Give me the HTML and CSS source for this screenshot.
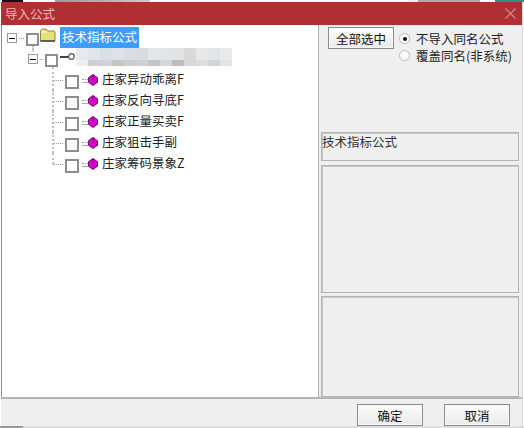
FILE: index.html
```html
<!DOCTYPE html>
<html lang="zh">
<head>
<meta charset="utf-8">
<title>导入公式</title>
<link rel="stylesheet" href="styles.css">
</head>
<body>
<div class="strip-top"></div>
<div class="dialog">
  <header class="titlebar">
    <span class="title">导入公式</span>
    <svg class="close" width="11" height="11" viewBox="0 0 11 11"><path d="M.5 .5 10.500 10.500M10.500 .5 .5 10.500" stroke="#d98a8a" stroke-width="1.200" fill="none"/></svg>
  </header>
  <main class="main">
    <section class="tree">
      <div class="row row-root">
        <span class="exp"></span><span class="dots d-short"></span><span class="check"></span>
        <svg class="folder" width="16" height="14" viewBox="0 0 16 14"><path d="M.5 13V2.500L2 1h4l1.500 2H14l1 1v9z" fill="#e6e07a" stroke="#8a8650"/><path d="M.5 13h14.500" stroke="#444" stroke-width="1.500"/><path d="M1.500 4h6" stroke="#fff"/></svg>
        <span class="label selected">技术指标公式</span>
      </div>
      <div class="row row-group">
        <span class="exp"></span><span class="dots d-short"></span><span class="check"></span>
        <svg class="key" width="16" height="10" viewBox="0 0 16 10"><circle cx="11.500" cy="4.500" r="2.800" fill="#fff" stroke="#555" stroke-width="1.200"/><path d="M0 5h8.500" stroke="#444" stroke-width="2"/></svg>
        <svg class="mosaic" width="156" height="18" viewBox="0 0 13 3" preserveAspectRatio="none" shape-rendering="crispEdges">
          <rect x="0" y="0" width="1" height="2" fill="#e6eaee"/><rect x="1" y="0" width="1" height="2" fill="#dfe5ea"/><rect x="2" y="0" width="1" height="2" fill="#d9e0e6"/><rect x="3" y="0" width="1" height="2" fill="#dde2e6"/><rect x="4" y="0" width="1" height="2" fill="#d8dee4"/><rect x="5" y="0" width="1" height="2" fill="#d6dce2"/><rect x="6" y="0" width="1" height="2" fill="#e4e7ea"/><rect x="7" y="0" width="1" height="2" fill="#e2e4e6"/><rect x="8" y="0" width="1" height="2" fill="#e2e3e4"/><rect x="9" y="0" width="1" height="2" fill="#dad9da"/><rect x="10" y="0" width="1" height="2" fill="#e6e8ea"/><rect x="11" y="0" width="1" height="2" fill="#e2e4e6"/><rect x="12" y="0" width="1" height="2" fill="#e8eaec"/>
          <rect x="0" y="2" width="1" height="1" fill="#eeeeee"/><rect x="1" y="2" width="1" height="1" fill="#cfcfcf"/><rect x="2" y="2" width="1" height="1" fill="#d2d2d2"/><rect x="3" y="2" width="1" height="1" fill="#c6c6c6"/><rect x="4" y="2" width="1" height="1" fill="#cdcdcd"/><rect x="5" y="2" width="1" height="1" fill="#d0d0d0"/><rect x="6" y="2" width="1" height="1" fill="#c4c4c4"/><rect x="7" y="2" width="1" height="1" fill="#d6d6d6"/><rect x="8" y="2" width="1" height="1" fill="#bdbdbd"/><rect x="9" y="2" width="1" height="1" fill="#d8d8d8"/><rect x="10" y="2" width="1" height="1" fill="#dcdcdc"/><rect x="11" y="2" width="1" height="1" fill="#d4d4d4"/><rect x="12" y="2" width="1" height="1" fill="#e4e4e4"/>
        </svg>
      </div>
      <div class="row row-leaf first-leaf">
        <span class="dots d-leaf"></span><span class="check"></span><span class="mini"></span>
        <svg class="gem" width="10" height="12" viewBox="0 0 11 13"><path d="M5.500 .5 10.500 4v5l-5 3.500L.5 9V4z" fill="#e000d0" stroke="#50105a"/><path d="M5.500 .5V6l5 3" stroke="#50105a" fill="none" stroke-width=".7"/></svg>
        <span class="label">庄家异动乖离F</span>
      </div>
      <div class="row row-leaf">
        <span class="dots d-leaf"></span><span class="check"></span><span class="mini"></span>
        <svg class="gem" width="10" height="12" viewBox="0 0 11 13"><path d="M5.500 .5 10.500 4v5l-5 3.500L.5 9V4z" fill="#e000d0" stroke="#50105a"/><path d="M5.500 .5V6l5 3" stroke="#50105a" fill="none" stroke-width=".7"/></svg>
        <span class="label">庄家反向寻底F</span>
      </div>
      <div class="row row-leaf">
        <span class="dots d-leaf"></span><span class="check"></span><span class="mini"></span>
        <svg class="gem" width="10" height="12" viewBox="0 0 11 13"><path d="M5.500 .5 10.500 4v5l-5 3.500L.5 9V4z" fill="#e000d0" stroke="#50105a"/><path d="M5.500 .5V6l5 3" stroke="#50105a" fill="none" stroke-width=".7"/></svg>
        <span class="label">庄家正量买卖F</span>
      </div>
      <div class="row row-leaf">
        <span class="dots d-leaf"></span><span class="check"></span><span class="mini"></span>
        <svg class="gem" width="10" height="12" viewBox="0 0 11 13"><path d="M5.500 .5 10.500 4v5l-5 3.500L.5 9V4z" fill="#e000d0" stroke="#50105a"/><path d="M5.500 .5V6l5 3" stroke="#50105a" fill="none" stroke-width=".7"/></svg>
        <span class="label">庄家狙击手副</span>
      </div>
      <div class="row row-leaf last-leaf">
        <span class="dots d-leaf"></span><span class="check"></span><span class="mini"></span>
        <svg class="gem" width="10" height="12" viewBox="0 0 11 13"><path d="M5.500 .5 10.500 4v5l-5 3.500L.5 9V4z" fill="#e000d0" stroke="#50105a"/><path d="M5.500 .5V6l5 3" stroke="#50105a" fill="none" stroke-width=".7"/></svg>
        <span class="label">庄家筹码景象Z</span>
      </div>
    </section>
    <aside class="side">
      <div class="options">
        <button class="select-all">全部选中</button>
        <div class="radios">
          <div class="radio-row"><span class="radio on"></span><div class="radio-text">不导入同名公式</div></div>
          <div class="radio-row"><span class="radio"></span><div class="radio-text">覆盖同名(非系统)</div></div>
        </div>
      </div>
      <div class="box box-name">技术指标公式</div>
      <div class="box box-mid"></div>
      <div class="box box-low"></div>
    </aside>
  </main>
  <footer class="footer">
    <button class="btn">确定</button>
    <button class="btn">取消</button>
  </footer>
</div>
<div class="strip-bottom"></div>
</body>
</html>
```
FILE: styles.css
```css
html, body {
  margin: 0;
  padding: 0;
  width: 524px;
  height: 428px;
  overflow: hidden;
  background: #fff;
  font-family: "Noto Sans CJK SC", "Liberation Sans", sans-serif;
  font-size: 12.500px;
  color: #222;
}
.strip-top {
  height: 2px;
  background:
    linear-gradient(90deg, #fff 2px, #111 2px, #111 23px, #fff 23px, #fff 55px, #999 55px, #ccc 150px, #fff 150px, #fff 408px, #eee 408px, #eee 418px, #aaa 418px, #aaa 480px, #fff 480px, #fff 495px, #2f8f80 495px);
}
.strip-bottom {
  height: 2px;
  background: linear-gradient(90deg, #999 23px, #ddd 23px);
}
.dialog {
  width: 522px;
  height: 424px;
  margin-left: 1px;
  display: flex;
  flex-direction: column;
  background: #efefef;
  box-sizing: border-box;
  border-right: 1px solid #d8d8d8;
}
.titlebar {
  height: 23px;
  flex: none;
  background: #b02f33;
  display: flex;
  align-items: center;
  justify-content: space-between;
  padding: 0 6px 0 4px;
}
.title { color: #e8b6b6; font-size: 12.500px; line-height: 23px; }
.main {
  flex: none;
  height: 372px;
  display: flex;
  border-bottom: 2px solid #b4b4b4;
}
.tree {
  width: 318px;
  flex: none;
  background: #fff;
  border-right: 1px solid #b0b0b0;
  box-shadow: inset 1px 0 0 #8c8c8c;
  padding-top: 2px;
  box-sizing: border-box;
  position: relative;
}
.row {
  height: 21px;
  display: flex;
  align-items: flex-start;
  position: relative;
}
.row-root { padding-left: 6px; }
.row-group { padding-left: 27px; }
.row-leaf { padding-left: 52px; }
.exp {
  width: 8px;
  height: 8px;
  margin-top: 6px;
  border: 1px solid #999;
  flex: none;
  background: linear-gradient(#000, #000) center / 6px 1px no-repeat #fff;
}
.dots {
  height: 0;
  border-top: 1px dotted #999;
  flex: none;
}
.d-short { width: 5px; margin: 11px 2px 0 2px; }
.row-group .d-short { width: 3px; }
.d-leaf { width: 10px; margin: 11px 2px 0 0; }
.check {
  width: 9px;
  height: 9px;
  border: 2px solid #8e8e8e;
  background: #fff;
  flex: none;
  margin-top: 6px;
  position: relative;
  z-index: 1;
}
.row-leaf .check { width: 10px; height: 10px; }
.folder { margin-left: 1px; flex: none; position: relative; top: 1px; }
.selected {
  background: #3f9cff;
  color: #fff;
  padding: 0 2px;
  margin-left: 4px;
  height: 21px;
}
.label { line-height: 20px; white-space: nowrap; }
.row-leaf .label { margin-left: 4px; color: #222; }
.key { margin: 4px 0 0 2px; flex: none; }
.mosaic { flex: none; }
.mini {
  width: 6px;
  height: 4px;
  margin: 10px 0 0 3px;
  flex: none;
  border-top: 1px dotted #999;
  border-bottom: 1px solid #aaa;
  box-sizing: border-box;
}
.gem { margin: 5px 0 0 0; flex: none; }
.row-group::before {
  content: "";
  position: absolute;
  left: 31px;
  top: -2px;
  height: 6px;
  width: 2px;
  background: repeating-linear-gradient(#bdbdbd 0 1px, #dedede 1px 2px);
}
.row-leaf::before {
  content: "";
  position: absolute;
  left: 51px;
  top: 0;
  height: 21px;
  border-left: 2px dotted #c0c0c0;
}
.first-leaf::before { top: -2px; height: 23px; }
.last-leaf::before { height: 11px; }
.side {
  flex: 1;
  min-width: 0;
  display: flex;
  flex-direction: column;
  padding: 2px 3px 0 2px;
  background: #efefef;
}
.options { display: flex; height: 105px; flex: none; padding-left: 7px; gap: 4px; }
button {
  font-family: inherit;
  font-size: 12.500px;
  color: #111;
  padding: 0;
  border: 1px solid #8c8c8c;
  background: linear-gradient(#fff 0, #f6f6f6 30%, #ebebeb 100%);
  box-shadow: inset 0 0 0 1px #f8f8f8;
}
.select-all { width: 66px; height: 22px; }
.radios { display: flex; flex-direction: column; margin-left: 1px; padding-top: 3px; }
.radio-row { display: flex; align-items: center; height: 17px; gap: 6px; white-space: nowrap; color: #222; }
.radio-text { line-height: 16px; height: 16px; }
.radio {
  width: 11px;
  height: 11px;
  border-radius: 50%;
  background: #fff;
  border: 1px solid #b8b8b8;
  box-sizing: border-box;
  flex: none;
  position: relative;
}
.radio.on::after {
  content: "";
  position: absolute;
  left: 3px;
  top: 3px;
  width: 4px;
  height: 4px;
  border-radius: 50%;
  background: #111;
}
.box {
  border: 1px solid #b4b4b4;
  box-shadow: inset 1px 1px 0 #c8c8c8;
  background: #efefef;
  flex: none;
  box-sizing: border-box;
}
.box-name { height: 29px; line-height: 18px; margin-bottom: 4px; color: #333; }
.box-mid { height: 128px; margin-bottom: 3px; }
.box-low { height: 101px; }
.footer {
  flex: 1;
  display: flex;
  justify-content: flex-end;
  align-items: flex-start;
  padding: 5px 12px 0 0;
  gap: 21px;
}
.btn { width: 66px; height: 22px; }
```
